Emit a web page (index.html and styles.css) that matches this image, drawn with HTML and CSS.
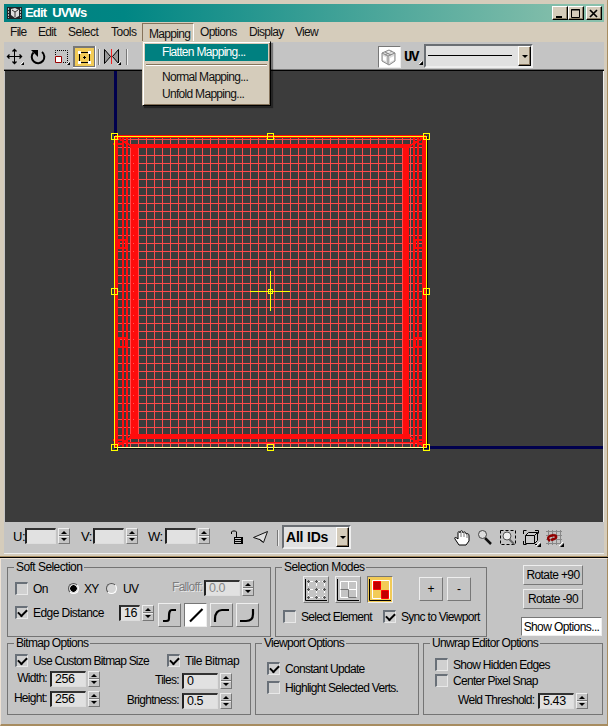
FILE: index.html
```html
<!DOCTYPE html>
<html lang="en">
<head>
<meta charset="utf-8">
<title>Edit UVWs</title>
<link rel="stylesheet" href="styles.css">
</head>
<body>
<main class="editor">
  <header class="titlebar">
    <svg class="logo" width="15" height="12" viewBox="0 0 15 12"><path fill="#202528" d="M0 0h15v12H0z"/><path d="M1.5 1v10M13.5 1v10" stroke="#bbb" stroke-dasharray="2 1"/><path fill="#ddd" d="M4 2l4-1 4 2v6l-4 2-4-3z"/><path fill="none" stroke="#333" d="M5 3l3 2 3-2M8 5v5"/></svg>
    <h1>Edit UVWs</h1>
    <div class="winbtns">
      <button><svg width="13" height="11"><path d="M3 9h6" stroke="#000" stroke-width="2"/></svg></button><button><svg width="13" height="11"><path d="M2.5 1.5h8v8h-8zM2 2h9" fill="none" stroke="#000"/></svg></button><button class="close"><svg width="13" height="11"><path d="M3 2l7 7M10 2l-7 7" stroke="#000" stroke-width="1.7"/></svg></button>
    </div>
  </header>
  <nav class="menubar">
    <span class="m-file">File</span><span class="m-edit">Edit</span><span class="m-select">Select</span><span class="m-tools">Tools</span>
    <span class="m-mapping">Mapping</span>
    <span class="m-options">Options</span><span class="m-display">Display</span><span class="m-view">View</span>
    <div class="menu">
      <span class="item active">Flatten Mapping...</span>
      <span class="rule"></span>
      <span class="item">Normal Mapping...</span>
      <span class="item">Unfold Mapping...</span>
    </div>
  </nav>
  <div class="toolbar">
    <svg class="tools" width="128" height="28" viewBox="4 42 128 28">
      <g stroke="#000" fill="none"><path d="M8 56.500h13M14.500 50v13" /><path d="M12.500 51.500l2-2 2 2M12.500 61.500l2 2 2-2M9.500 54.500l-2 2 2 2M19.500 54.500l2 2-2 2" stroke-width="1.4"/></g>
      <path d="M33.500 52.500a6.300 6.300 0 1 0 8.500-.5" fill="none" stroke="#000" stroke-width="2"/><path d="M31 50h7v7z"/>
      <path d="M55.500 55V50.500H67.500V62.500H62" fill="none" stroke="#000" stroke-dasharray="1 1"/><path d="M55.500 56.500h6v6h-6z" fill="#fff" stroke="#900"/>
      <path d="M73 46h23v22H73z" fill="#fff"/><path d="M73 46h22v21H73z" fill="#777"/><path d="M75 48h19v18H75z" fill="#f2cb57"/>
      <path d="M79.500 52.500h10v10h-10zM84.500 56v3M83 57.500h3" fill="none" stroke="#000"/><path d="M78 51h3v3h-3zM88 51h3v3h-3zM78 61h3v3h-3zM88 61h3v3h-3z" fill="#fff"/>
      <path d="M98.500 49v16M126.500 49v16" stroke="#777"/><path d="M99.500 49v16M127.500 49v16" stroke="#eee"/>
      <path d="M104.500 49.500v14l6-7zM118.500 49.500v14l-6-7z" fill="#999" stroke="#000"/><path d="M111.500 49v15" stroke="#e22"/>
      <path d="M24 62v3h-3zM70 62v3h-3zM121 62v3h-3z"/><path d="M23.500 61.500l-3 3M69.500 61.500l-3 3M120.500 61.500l-3 3" stroke="#fff"/>
    </svg>
    <div class="cube"><svg width="20" height="20"><path d="M3 6l7-3 6 3v8l-6 4-7-4z" fill="#ddd" stroke="#888"/><path d="M3 6l6 3 7-3M9 9v8M6 5l6 3M13 4L6 8" fill="none" stroke="#888"/><path d="M4 9l3 1v4l-3-1zM11 11l4-2v4l-4 2zM8 5l2-1 2 1-2 1z" fill="#fff"/></svg></div>
    <span class="uv">UV</span>
    <svg class="flyout" width="4" height="4"><path d="M4 0v4H0z"/><path d="M0 3L3 0" stroke="#fff"/></svg>
    <div class="select line"><svg width="84" height="2"><path d="M0 .5h84" stroke="#000"/></svg><i class="drop"><b class="down"></b></i></div>
  </div>
  <div class="viewport">
    <svg width="597" height="451" viewBox="6 71 597 451" shape-rendering="crispEdges">
      <defs>
        <pattern id="grid" x="114" y="139" width="8" height="8" patternUnits="userSpaceOnUse"><path d="M.5 0v8M0 .5h8" stroke="#ff4b4b" fill="none"/></pattern>
        <pattern id="dots" x="130" y="139" width="8" height="8" patternUnits="userSpaceOnUse"><path fill="#ff5555" d="M3 0h1v1H3z"/></pattern>
      </defs>
      <path fill="#00004d" d="M114 71h3v65h-3zM426 446h177v3H426z"/>
      <path fill="#070707" d="M427 137h1v310h-1zM115 448h311v1H115z"/>
      <path fill="url(#grid)" d="M115 137h311v310H115z"/>
      <g fill="#ff0c0c">
        <path d="M115 135h311v1H115zM115 137h311v1H115zM115 137h3v310h-3zM122 137h2v310h-2zM126 137h2v310h-2zM131 144h7v294h-7zM403 144h6v294h-6zM413 137h2v310h-2zM417 137h2v310h-2zM422 137h4v310h-4zM130 144h280v4H130zM130 434h280v5H130zM118 442h304v1H118z"/>
        <path d="M113 143h11v2h-11zM113 439h11v2h-11zM418 143h9v2h-9zM418 439h9v2h-9z"/>
      </g>
      <g fill="none" stroke="#ff0c0c" stroke-width="2"><path d="M118 138l15 9M423 138l-15 9M117 446l17-10M424 446l-17-10"/><path d="M119 240h7v8h-7zM119 338h7v9h-7zM415 240h8v8h-8zM415 338h8v9h-8z"/></g>
      <path fill="url(#dots)" d="M130 148h8v286h-8z"/>
      <path d="M114.500 136.500h312v311h-312z" fill="none" stroke="#ffff00"/>
      <path d="M117 447.500h307" stroke="#ffffa0"/>
      <g fill="none" stroke="#ffff00"><path d="M111.500 133.500h6v6h-6zM267.500 133.500h6v6h-6zM423.500 133.500h6v6h-6zM111.500 288.500h6v6h-6zM423.500 288.500h6v6h-6zM111.500 444.500h6v6h-6zM267.500 444.500h6v6h-6zM423.500 444.500h6v6h-6z"/></g>
      <path d="M250 291.500h40M270.500 271v40" stroke="#ffff00"/><path d="M268.500 289.500h4v4h-4z" fill="none" stroke="#ffff00"/>
    </svg>
  </div>
  <div class="coords">
    <label class="c-u">U:</label><i class="field wide"></i><i class="spin"></i>
    <label class="c-v">V:</label><i class="field wide"></i><i class="spin"></i>
    <label class="c-w">W:</label><i class="field wide"></i><i class="spin"></i>
    <svg class="lock" width="54" height="18" viewBox="228 528 54 18"><path d="M231.500 534v-2l1-1h3l1 1v5" fill="none" stroke="#000"/><path d="M234 537h9v7h-9z"/><path d="M235 538.500h6M235 540.500h6M235 542.500h6" stroke="#c4c4c4"/><path d="M253.500 537.500l14-6-4 11-4-3zM263 542l-4-3" fill="#ddd" stroke="#111"/><path d="M277.500 530v16" stroke="#777"/><path d="M278.500 530v16" stroke="#eee"/></svg>
    <div class="select ids"><span>All IDs</span><i class="drop"><b class="down"></b></i></div>
    <svg class="viewtools" width="116" height="20" viewBox="452 527 116 20">
      <path d="M459 545l-4-6c-1-2 1-2 3 0v-6c0-2 2-2 2 0 0-3 3-3 3 0 1-2 3-1 3 1 2-1 3 0 3 2v5l-3 4z" fill="#fff" stroke="#000"/><path d="M461 532v5M464 532v5M467 534v4" stroke="#777"/>
      <path d="M485 538l6 6" stroke="#111" stroke-width="2.500"/><circle cx="482.500" cy="534.500" r="4" fill="#ddd" stroke="#444"/>
      <path d="M500.500 530.500h15v14h-15z" fill="none" stroke="#000" stroke-dasharray="3 2"/><path d="M509 539l5 5" stroke="#666" stroke-width="2"/><circle cx="507" cy="536" r="4" fill="#eee" stroke="#555"/>
      <path d="M523.500 534v-3.500h3M535 530.500h3.500v3M523.500 541v3.500h3M535 544.500h3" fill="none" stroke="#000"/><path d="M525.500 535.500h9v8h-9zM525.500 535.500l3-3h9l-3 3M537.500 532.500v8l-3 3" fill="#ccc" stroke="#000"/>
      <path d="M548.500 530v15M552.500 530v15M556.500 530v15M560.500 530v15M546 531.500h16M546 535.500h16M546 539.500h16M546 543.500h16" stroke="#888"/><path d="M550 541c-3-2-2-4 0-5l4-1M554 535c3 1 3 3 0 4l-3 1" fill="none" stroke="#900000" stroke-width="2.500"/>
      <path d="M541 543v4h-4zM564 543v4h-4z"/><path d="M540 542l-4 4M563 542l-4 4" stroke="#fff"/>
    </svg>
  </div>
</main>
<section class="panel">
  <div class="row top">
    <fieldset class="soft">
      <legend>Soft Selection</legend>
      <div class="line1"><i class="check"></i><span class="on">On</span><i class="radio sel"></i><span class="xy">XY</span><i class="radio"></i><span class="ruv">UV</span><span class="falloff">Falloff:</span><i class="field f-fall">0.0</i><i class="spin"></i></div>
      <div class="line2"><i class="check on1"></i><span class="edge">Edge Distance</span><i class="field f-edge">16</i><i class="spin"></i>
        <div class="curves"><button><svg width="21" height="22"><path d="M4 17h3c3 0 3-1 3-4s0-7 3-7h4"/></svg></button><button class="lit"><svg width="21" height="22"><path d="M5 17.500L17.500 5"/></svg></button><button><svg width="21" height="22"><path d="M4 18v-3c0-6 3-9 7-9h7"/></svg></button><button><svg width="21" height="22"><path d="M3 17h6c5 0 7-3 7-7V5"/></svg></button></div>
      </div>
    </fieldset>
    <fieldset class="modes">
      <legend>Selection Modes</legend>
      <div class="modebtns">
        <button><svg width="24" height="24"><path d="M1.500 1v21.500H23" stroke="#000" fill="none"/><path d="M4 3.500h18M4 11.500h18M4 19.500h18M4.500 3v17M12.500 3v17M20.500 3v17" stroke="#fff" stroke-dasharray="5 2"/><path d="M3 3.500h3M11 3.500h3M19 3.500h3M3 11.500h3M11 11.500h3M19 11.500h3M3 19.500h3M11 19.500h3M19 19.500h3M4.500 2v3M12.500 2v3M20.500 2v3M4.500 10v3M12.500 10v3M20.500 10v3M4.500 18v3M12.500 18v3M20.500 18v3" stroke="#555"/></svg></button>
        <button><svg width="24" height="24"><path d="M1.500 1v21.500H23" stroke="#000" fill="none"/><path d="M4.500 3.500h16v16h-16zM12.500 4v16M4 11.500h16" fill="none" stroke="#fff"/><path d="M4.500 11.500h8v8h8" fill="none" stroke="#777"/></svg></button>
        <button class="gold"><svg width="24" height="24"><path d="M1.500 1v21.500H23" stroke="#000" fill="none"/><path d="M4.500 2.500h17v18h-17z" fill="#f2cb57" stroke="#fff"/><path d="M5.500 3.500h7v8h-7zM13.500 12.500h7v8h-7z" fill="#c00000" stroke="#f00"/></svg></button>
        <button class="pm plus">+</button><button class="pm">-</button>
      </div>
      <div class="modechecks"><i class="check"></i><span class="selel">Select Element</span><i class="check on1"></i><span>Sync to Viewport</span></div>
    </fieldset>
    <div class="actions"><button>Rotate +90</button><button>Rotate -90</button><button class="show">Show Options...</button></div>
  </div>
  <div class="row bottom">
    <fieldset class="bitmap">
      <legend>Bitmap Options</legend>
      <div class="bchecks"><i class="check on1"></i><span class="custom">Use Custom Bitmap Size</span><i class="check on1"></i><span class="tile">Tile Bitmap</span></div>
      <div class="bfields">
        <div class="bcol left"><div><label>Width:</label><i class="field f35">256</i><i class="spin"></i></div><div><label>Height:</label><i class="field f35">256</i><i class="spin"></i></div></div>
        <div class="bcol right"><div><label>Tiles:</label><i class="field f35">0</i><i class="spin"></i></div><div><label>Brightness:</label><i class="field f35">0.5</i><i class="spin"></i></div></div>
      </div>
    </fieldset>
    <fieldset class="vopts">
      <legend>Viewport Options</legend>
      <div class="v1"><i class="check on1"></i><span>Constant Update</span></div>
      <div class="v2"><i class="check"></i><span>Highlight Selected Verts.</span></div>
    </fieldset>
    <fieldset class="unwrap">
      <legend>Unwrap Editor Options</legend>
      <div class="u1"><i class="check"></i><span>Show Hidden Edges</span></div>
      <div class="u2"><i class="check"></i><span>Center Pixel Snap</span></div>
      <div class="u3"><label>Weld Threshold:</label><i class="field f35">5.43</i><i class="spin"></i></div>
    </fieldset>
  </div>
</section>
</body>
</html>
```
FILE: styles.css
```css
* { box-sizing: border-box; }
body { margin: 0; width: 608px; height: 726px; overflow: hidden; background: #d5ccbb; color: #000; font: 12px/14px "Liberation Sans", Arial, sans-serif; }
svg { display: block; flex: none; }
i { font-style: normal; display: block; flex: none; }
span, label { white-space: nowrap; flex: none; }
button { font: inherit; padding: 0; margin: 0; border-radius: 0; color: #000; flex: none; }

.editor { height: 557px; padding: 4px 3px 1px 4px; border-right: 1px solid #a78c60; border-bottom: 1px solid #a78c60; box-shadow: 0 1px #000; background: #d5ccbb; }
.titlebar { display: flex; align-items: center; height: 18px; padding: 0 2px 0 3px; background: linear-gradient(90deg, #008080 0, #008684 20%, #88c0ac 96%); }
.titlebar h1 { margin: 0 0 0 3px; color: #fff; font: bold 13px/18px "Liberation Sans", sans-serif; width: 300px; letter-spacing: -.8px; word-spacing: 3px; }
.winbtns { display: flex; margin-left: auto; }
.winbtns button { width: 16px; height: 14px; background: #d5ccbb; border: 1px solid; border-color: #fff #000 #000 #fff; box-shadow: inset -1px -1px #8b7e66; }
.winbtns .close { margin-left: 2px; }

.menubar { display: flex; position: relative; z-index: 2; height: 20px; line-height: 20px; letter-spacing: -.7px; color: #111; }
.m-file { width: 28px; padding-left: 6px; }
.m-edit { width: 30px; padding-left: 6px; }
.m-select { width: 43px; padding-left: 6px; letter-spacing: -.5px; }
.m-tools { width: 37px; padding-left: 6px; letter-spacing: -.5px; }
.m-mapping { width: 52px; height: 19px; padding-left: 6px; border: 1px solid #85735b; border-right-color: #fff; border-bottom: 0; margin-top: 1px; }
.m-options { width: 49px; padding-left: 6px; }
.m-display { width: 46px; padding-left: 6px; }
.m-view { padding-left: 6px; }
.menu { position: absolute; left: 138px; top: 19px; width: 129px; height: 65px; padding: 2px; background: #d5ccbb; border: 1px solid; border-color: #d5ccbb #000 #000 #d5ccbb; box-shadow: inset 1px 1px #fff, inset -1px -1px #85735b, 2px 2px 1px #0006; }
.menu .item { display: block; height: 17px; padding-left: 17px; line-height: 17px; }
.menu .active { background: #008080; color: #fff; }
.menu .rule { display: block; height: 2px; margin: 3px 1px; border-top: 1px solid #85735b; border-bottom: 1px solid #fff; }

.toolbar { display: flex; height: 29px; background: #c4c4c4; border-bottom: 1px solid #000; box-shadow: inset 0 -1px #777; align-items: flex-start; }
.cube { margin: 4px 0 0 246px; width: 23px; height: 22px; background: #fff; border: 1px solid; border-color: #777 #eee #eee #777; }
.uv { margin: 7px 0 0 3px; font: bold 14px/16px "Liberation Mono", monospace; letter-spacing: -1.3px; width: 15px; }
.flyout { margin: 19px 1px 0 0; }
.select { display: flex; align-items: center; background: #e1e1e1; border: 2px solid; border-color: #6a6e73 #eee #eee #6a6e73; }
.line { width: 109px; height: 24px; margin-top: 2px; padding-left: 2px; }
.drop { display: flex; align-items: center; justify-content: center; width: 13px; height: 20px; margin-left: auto; background: #d5ccbb; border: 1px solid; border-color: #fff #000 #000 #fff; box-shadow: inset -1px -1px #85735b; }
.down { border: 3px solid transparent; border-top-color: #000; border-bottom: 0; }

.viewport { width: 600px; height: 451px; padding-left: 1px; background: #3c3c3c; border-left: 1px solid #c4c4c4; border-right: 1px solid #eee; }
.coords { display: flex; height: 32px; padding-top: 6px; background: #c4c4c4; font-size: 13px; border-bottom: 1px solid #eee; }
.coords label { padding-top: 1px; line-height: 15px; letter-spacing: -.5px; }
.c-u { width: 21px; padding-left: 9px; }
.c-v { width: 23px; padding-left: 11px; }
.c-w { width: 27px; padding-left: 10px; }
.field { height: 16px; padding-left: 3px; line-height: 12px; background: #e1e1e1; border: 2px solid; border-color: #333 #ddd #ddd #222; border-width: 2px 1px 1px 2px; font-size: 12.500px; letter-spacing: -.4px; }
.wide { width: 31px; }
.spin { width: 12px; height: 16px; margin-left: 2px; border: 1px solid; border-color: #eee #777 #777 #eee; background: linear-gradient(#777, #777) 0 6px / 11px 1px no-repeat, linear-gradient(#eee, #eee) 0 7px / 11px 1px no-repeat #c4c4c4; padding: 2px 2px; }
.spin::before { content: ""; display: block; border: 3px solid transparent; border-top: 0; border-bottom-color: #000; }
.spin::after { content: ""; display: block; margin-top: 4px; border: 3px solid transparent; border-bottom: 0; border-top-color: #000; }
.lock { margin-left: 18px; }
.ids { width: 69px; height: 24px; margin-top: -3px; font: bold 14px/20px "Liberation Sans", sans-serif; letter-spacing: -.2px; padding-left: 2px; }
.viewtools { margin: -1px 0 0 101px; }

.panel { height: 168px; margin-top: 1px; padding: 1px 4px 0 6px; background: #c4c4c4; border: solid; border-width: 1px 1px 2px; border-color: #eee2d5 #a78c60 #a78c60 #eee2d5; font-size: 12px; letter-spacing: -.7px; }
.row { display: flex; }
fieldset { margin: 0; padding: 0; min-width: 0; border: 1px solid #747474; flex: none; }
fieldset > div { display: flex; }
legend { height: 14px; margin-left: 6px; padding: 0 2px; line-height: 14px; white-space: nowrap; }
.soft legend, .modes legend { letter-spacing: -.55px; }
.soft { width: 264px; height: 77px; }
.modes { width: 212px; height: 77px; margin-left: 4px; }
.check { width: 13px; height: 13px; background: #d0d0d0; border: 2px solid; border-color: #697078 #e8e8e8 #e8e8e8 #697078; border-width: 2px 1px 1px 2px; }
.on1::before { content: ""; display: block; width: 7px; height: 4px; margin: 1px 0 0 1px; border: solid #000; border-width: 0 0 2px 2px; transform: rotate(-45deg); }
.radio { width: 11px; height: 11px; border-radius: 50%; border: 1px solid; border-color: #555 #fff #fff #555; background: #d5d5d5; }
.radio.sel { background: radial-gradient(#000 0 3px, #d5d5d5 3.500px); }
.line1 { padding: 8px 0 0 7px; height: 32px; }
.line1 .on { width: 35px; margin-left: 5px; }
.line1 .radio { margin: 1px 5px 0 0; }
.line1 .xy { width: 22px; }
.ruv { width: 49px; margin-left: 1px; }
.falloff { width: 32px; margin-top: -2px; color: #7d7d7d; text-shadow: 1px 1px #e8e8e8; }
.f-fall { width: 36px; color: #888; margin-top: -2px; }
.line1 .spin { margin-top: -2px; }
.line2 { padding: 0 0 0 7px; }
.edge { width: 86px; margin-left: 5px; letter-spacing: -.55px; }
.f-edge { width: 21px; margin-top: -1px; }
.line2 .spin { margin-top: -1px; }
.curves { display: flex; gap: 3px; margin: -3px 0 0 4px; }
.curves button, .pm { width: 23px; height: 24px; background: #c4c4c4; border: 1px solid; border-color: #eee #777 #777 #eee; }
.curves path { fill: none; stroke: #000; stroke-width: 2.200; }
.curves .lit { background: #fff; border-color: #777 #eee #eee #777; }
.modebtns { height: 36px; padding: 2px 0 0 27px; gap: 6px; }
.modebtns button { width: 26px; height: 27px; background: #c4c4c4; border: 1px solid; border-color: #eee #777 #777 #eee; }
.modebtns .gold { background: #f2cb57; border-color: #777 #eee #eee #777; }
.modebtns .pm { width: 24px; height: 24px; margin-top: 1px; }
.modebtns .plus { margin-left: 20px; margin-right: -2px; }
.modechecks { padding-left: 7px; }
.selel { width: 82px; margin-left: 5px; }
.modechecks span:last-child { margin-left: 5px; }
.actions { margin: 5px 0 0 34px; }
.actions button { display: block; width: 60px; height: 20px; margin: 0 0 4px 2px; background: #c4c4c4; border: 1px solid; border-color: #eee #777 #777 #eee; letter-spacing: -.6px; white-space: nowrap; }
.actions .show { width: 81px; height: 19px; margin: 8px 0 0; background: #fff; border-color: #777 #eee #eee #777; }
.bottom { margin-top: -1px; }
.bottom fieldset { height: 79px; }
.bitmap { width: 244px; }
.vopts { width: 164px; margin-left: 4px; }
.unwrap { width: 180px; margin-left: 4px; }
.bchecks { padding: 4px 0 0 7px; height: 21px; }
.custom { width: 134px; margin-left: 5px; letter-spacing: -.8px; }
.tile { margin-left: 5px; letter-spacing: -.5px; }
.bfields .bcol > div { display: flex; height: 20px; justify-content: flex-end; }
.bcol.left { width: 92px; }
.bcol.right { width: 132px; padding-top: 2px; }
.bcol label { margin-right: 3px; }
.f35 { width: 36px; }
.v1, .v2, .u1, .u2 { gap: 5px; }
.v1 { padding: 12px 0 0 11px; height: 31px; }
.v2 { padding-left: 11px; }
.u1 { padding: 8px 0 0 11px; height: 24px; }
.u2 { padding-left: 11px; height: 19px; }
.u3 { padding-left: 34px; }
.u3 label { width: 80px; }
```
